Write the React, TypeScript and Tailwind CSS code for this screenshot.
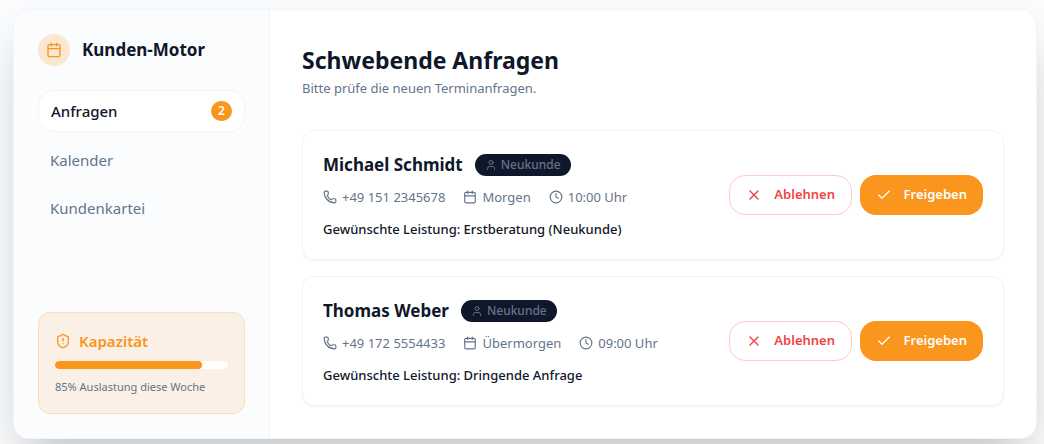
import { Calendar, Check, Clock, Phone, ShieldAlert, User, X } from "lucide-react";

type Request = { name: string; phone: string; day: string; time: string; service: string };

const requests: Request[] = [
  { name: "Michael Schmidt", phone: "+49 151 2345678", day: "Morgen", time: "10:00 Uhr", service: "Erstberatung (Neukunde)" },
  { name: "Thomas Weber", phone: "+49 172 5554433", day: "Übermorgen", time: "09:00 Uhr", service: "Dringende Anfrage" },
];

function Sidebar() {
  return (
    <aside className="flex w-64 shrink-0 flex-col border-r border-slate-100 bg-[#fbfcfe] p-6">
      <div className="mb-6 flex h-8 items-center gap-3">
        <span className="flex size-8 items-center justify-center rounded-full bg-[#fae7d0] text-[#fa951e]">
          <Calendar size={16} />
        </span>
        <span className="text-[17px] font-bold">Kunden-Motor</span>
      </div>
      <nav className="flex flex-col gap-2">
        <a href="#anfragen" aria-current="page" className="flex h-[42px] items-center justify-between rounded-2xl border border-slate-100 bg-white px-3 text-[15px] font-medium">
          Anfragen
          <span className="flex h-5 w-[21px] items-center justify-center rounded-full bg-[#fa951e] text-xs font-semibold text-white">2</span>
        </a>
        <a href="#kalender" className="flex h-10 items-center px-3 text-[15px] text-slate-500">Kalender</a>
        <a href="#kundenkartei" className="flex h-10 items-center px-3 text-[15px] text-slate-500">Kundenkartei</a>
      </nav>
      <section className="mt-auto rounded-xl border border-[#fbdfb8] bg-[#faf0e5] p-4">
        <div className="mb-2 flex items-center gap-2 text-[#fa951e]">
          <ShieldAlert size={16} />
          <h2 className="text-[15px] leading-6 font-semibold">Kapazität</h2>
        </div>
        <div className="mb-2 h-2 overflow-hidden rounded-full bg-white">
          <div className="h-full w-[85%] rounded-full bg-[#fa951e]" />
        </div>
        <p className="text-[11px] leading-5 text-[#64748b]">85% Auslastung diese Woche</p>
      </section>
    </aside>
  );
}

function RequestCard({ request }: { request: Request }) {
  return (
    <article className="flex items-center justify-between gap-4 rounded-xl border border-slate-100 bg-white p-5 shadow-xs">
      <div className="flex flex-col gap-2">
        <div className="flex items-center gap-3">
          <h2 className="text-[17px] leading-7 font-bold">{request.name}</h2>
          <span className="flex items-center gap-1 rounded-full bg-[#0f172a] px-2.5 py-[3px] text-xs font-medium text-[#64748b]">
            <User size={12} />
            Neukunde
          </span>
        </div>
        <div className="flex items-center gap-[18px] text-[13px] leading-5 text-[#64748b]">
          <span className="flex items-center gap-[5px]"><Phone size={14} />{request.phone}</span>
          <span className="flex items-center gap-[5px]"><Calendar size={14} />{request.day}</span>
          <span className="flex items-center gap-[5px]"><Clock size={14} />{request.time}</span>
        </div>
        <p className="mt-1 text-[13px] leading-5 font-medium">Gewünschte Leistung: {request.service}</p>
      </div>
      <div className="flex gap-2">
        <button type="button" className="flex h-10 w-[123px] items-center justify-between rounded-2xl border border-[#fecaca] bg-white px-4 text-[13px] font-semibold text-[#ef4444]">
          <X size={16} />
          Ablehnen
        </button>
        <button type="button" className="flex h-10 w-[123px] items-center justify-between rounded-2xl bg-[#fa951e] px-4 text-[13px] font-semibold text-white">
          <Check size={16} />
          Freigeben
        </button>
      </div>
    </article>
  );
}

export default function App() {
  return (
    <div className="min-h-screen overflow-hidden bg-[#fbfcfe] pt-[9px] pr-[7px] pb-[5px] pl-[13px] font-['Noto_Sans',sans-serif] text-slate-900">
      <div className="flex min-h-[430px] overflow-hidden rounded-2xl border border-slate-100 bg-white shadow-2xl">
        <Sidebar />
        <main className="min-w-0 flex-1 p-8 pb-6">
          <h1 className="text-[23px] leading-9 font-bold">Schwebende Anfragen</h1>
          <p className="text-[13px] leading-5 text-[#64748b]">Bitte prüfe die neuen Terminanfragen.</p>
          <div className="mt-8 flex flex-col gap-4">
            {requests.map((request) => (
              <RequestCard key={request.name} request={request} />
            ))}
          </div>
        </main>
      </div>
    </div>
  );
}
